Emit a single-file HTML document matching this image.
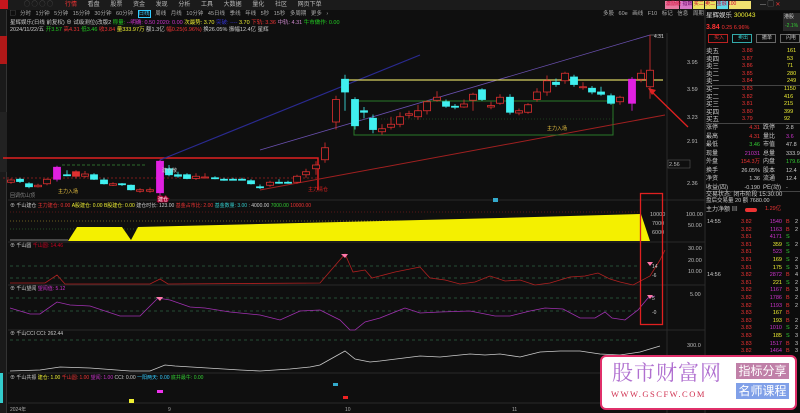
<!DOCTYPE html>
<html><head><meta charset="utf-8">
<style>
*{margin:0;padding:0;box-sizing:border-box}
body{width:800px;height:413px;overflow:hidden;background:#0f0f0f;font-family:"Liberation Sans","Noto Sans CJK SC",sans-serif;font-size:6px;color:#ccc;position:relative}
.a{position:absolute;white-space:nowrap;line-height:1}
svg{position:absolute;left:0;top:0}
</style></head><body>
<div class="a" style="left:0;top:0;width:800px;height:10px;background:#1b1b1b"></div>
<div class="a" style="left:0;top:0;width:8px;height:9px;background:#c8161d"></div>
<div class="a" style="left:0;top:2px;font-size:6px;color:#bbb;word-spacing:9px;left:65px"><span style="color:#e33">行情</span> 看盘 股票 资金 发现 分析 工具 大数据 量化 社区 网页下单</div>
<div class="a" style="left:24px;top:2px;color:#666;font-size:6px">◯ ◯ ◯ ◯</div>
<div class="a" style="left:665px;top:1px;height:8px;width:14px;background:#e87aa0"></div>
<div class="a" style="left:680px;top:1px;height:8px;width:12px;background:#d87ac8"></div>
<div class="a" style="left:693px;top:1px;height:8px;width:11px;background:#e8e060"></div>
<div class="a" style="left:705px;top:1px;height:8px;width:11px;background:#e8e060"></div>
<div class="a" style="left:717px;top:1px;height:8px;width:11px;background:#60d8e8"></div>
<div class="a" style="left:729px;top:1px;height:8px;width:22px;background:#f0e070"></div>
<div class="a" style="left:666px;top:2px;color:#c03;font-size:5px;letter-spacing:0">激励版 <span style="color:#606">指数</span> 买二 卖二 金融 100</div>
<div class="a" style="left:760px;top:2px;color:#aaa;font-size:6px">— ▢ <span style="color:#e33">✕</span></div>
<div class="a" style="left:10px;top:12px;color:#aaa;font-size:5.5px;word-spacing:3px">▢ 分时 1分钟 5分钟 15分钟 30分钟 60分钟 <span style="color:#3cf;border:1px solid #3cf">日线</span> 周线 月线 10分钟 45日线 季线 年线 5秒 15秒 多周期 更多 ›</div>
<div class="a" style="left:603px;top:12px;color:#aaa;font-size:5.5px;word-spacing:3px">多股 60e 画线 F10 标记 信息 周期</div>
<div class="a" style="left:10px;top:21px;font-size:5.5px;color:#ccc">星辉娱乐(日线 前复权) ⊕ 试级测位(改版2 <span style="color:#2c2">称量:</span> <span style="color:#c3c">--明确: 0.50 2020: 0.00</span> <span style="color:#ee3">次最势: 3.70</span> <span style="color:#33c">突破: ----</span> <span style="color:#ee3">3.70</span> <span style="color:#e33">下轨: 3.36</span> <span style="color:#c8c">中轨: 4.31</span> <span style="color:#2c2">牛市做作: 0.00</span></div>
<div class="a" style="left:10px;top:28px;font-size:5.5px;color:#ccc">2024/11/22/五 <span style="color:#2c2">开3.57</span> <span style="color:#e33">高4.31</span> <span style="color:#2c2">低3.46</span> <span style="color:#e33">收3.84</span> <span style="color:#ee3">量333.97万</span> 额1.3亿 <span style="color:#e33">幅0.25(6.96%)</span> 换26.05% 振幅12.4亿 星辉</div>
<div class="a" style="left:0;top:10px;width:7px;height:403px;background:#1a1a1a;border-right:1px solid #333"></div>
<div class="a" style="left:0;top:36px;width:7px;height:28px;background:#b01818"></div>
<div class="a" style="left:0;top:112px;width:7px;height:60px;background:#222"></div>

<svg width="800" height="413">
 <g stroke="#2a2a2a" stroke-width="1">
  <line x1="8" y1="200" x2="705" y2="200"/><line x1="8" y1="242" x2="705" y2="242"/>
  <line x1="8" y1="285" x2="705" y2="285"/><line x1="8" y1="330" x2="705" y2="330"/>
  <line x1="8" y1="373" x2="705" y2="373"/><line x1="8" y1="403" x2="705" y2="403"/>
  <line x1="667" y1="33" x2="667" y2="413"/><line x1="705" y1="10" x2="705" y2="413"/>
 </g>
 <polyline points="3,158 318,158 318,190" fill="none" stroke="#e02020" stroke-width="1.5"/>
 <line x1="3" y1="178" x2="318" y2="178" stroke="#a02020" stroke-dasharray="2,2" stroke-width="0.7"/>
 <line x1="62" y1="165" x2="145" y2="165" stroke="#3a8a3a" stroke-dasharray="3,2" stroke-width="0.7"/>
 <line x1="160" y1="160" x2="420" y2="55" stroke="#2a2a90" stroke-width="1.2"/>
 <line x1="260" y1="150" x2="650" y2="35" stroke="#6a50b0" stroke-width="0.8"/>
 <line x1="260" y1="190" x2="665" y2="115" stroke="#a02020" stroke-width="1"/>
 <line x1="345" y1="80" x2="663" y2="80" stroke="#d8d060" stroke-width="1.2"/>
 <rect x="354" y="101" width="259" height="34" fill="none" stroke="#2a7a2a" stroke-width="1"/>
 <line x1="354" y1="119" x2="613" y2="119" stroke="#2a6a2a" stroke-dasharray="1,2" stroke-width="0.6"/>
 <line x1="650" y1="35" x2="663" y2="35" stroke="#aaa" stroke-width="0.5"/>
 <line x1="650" y1="90" x2="688" y2="127" stroke="#e02020" stroke-width="1.3"/>
 <polygon points="648,88 656,90 652,95" fill="#e02020"/>
 <g id="candles"></g>
 <g font-size="5" font-family="Liberation Sans,Noto Sans CJK SC,sans-serif">
  <text x="58" y="193" fill="#e8c040">主力入场</text>
  <text x="162" y="172" fill="#ccc">建仓散</text>
  <text x="158" y="201" fill="#fff" style="paint-order:stroke" stroke="#a03" stroke-width="2">建仓</text>
  <text x="308" y="191" fill="#e02020">主力清仓</text>
  <text x="547" y="130" fill="#e8c040">主力入场</text>
  <text x="654" y="38" fill="#ccc">4.31</text>
  <text x="10" y="197" fill="#888">回调优山顶</text>
 </g>
 <g font-size="5.5" fill="#bbb" font-family="Liberation Sans">
  <text x="687" y="64">3.95</text><text x="687" y="91">3.59</text><text x="687" y="119">3.23</text>
  <text x="687" y="143">2.91</text><text x="687" y="185">2.36</text>
  <rect x="668" y="160" width="22" height="8" fill="none" stroke="#666" stroke-width="0.5"/><text x="669" y="166">2.56</text>
  <text x="686" y="216">100.00</text><text x="688" y="227">50.00</text>
  <text x="688" y="250">30.00</text><text x="688" y="262">20.00</text><text x="688" y="273">10.00</text>
  <text x="690" y="296">5.00</text><text x="687" y="347">300.0</text>
  <text x="650" y="216">10000</text><text x="652" y="225">7000</text><text x="652" y="234">6000</text>
 </g>
 <g font-size="5" font-family="Liberation Sans,Noto Sans CJK SC,sans-serif">
  <text x="10" y="207" fill="#ccc">⊕ 千山建仓 <tspan fill="#e33">主力建仓: 0.00</tspan> <tspan fill="#ee3">A股建仓: 0.00</tspan> <tspan fill="#ee3">B股建仓: 0.00</tspan> <tspan fill="#ccc">建仓时长: 123.00</tspan> <tspan fill="#e33">基金占市比: 2.00</tspan> <tspan fill="#3cc">基金数量: 3.00</tspan> : 4000.00 <tspan fill="#3c3">7000.00</tspan> <tspan fill="#e33">10000.00</tspan></text>
 </g>
 <line x1="10" y1="212" x2="640" y2="212" stroke="#a02020" stroke-dasharray="1,2" stroke-width="0.6"/>
 <line x1="10" y1="221" x2="640" y2="221" stroke="#ccaa30" stroke-dasharray="1,2" stroke-width="0.6"/>
 <line x1="10" y1="229" x2="640" y2="229" stroke="#3a8a3a" stroke-dasharray="1,2" stroke-width="0.6"/>
 <polygon points="68,241 77,227 122,227 131,240 138,227 300,223 500,218 641,214 650,241" fill="#f4f000"/>
 <line x1="10" y1="240" x2="68" y2="240" stroke="#aaa" stroke-width="0.7"/>
 <text x="10" y="247" font-size="5" fill="#ccc">⊕ 千山圆 <tspan fill="#c02">千山圆: 14.46</tspan></text>
 <g stroke="#3a8a5a" stroke-dasharray="3,3" stroke-width="0.6"><line x1="10" y1="266" x2="640" y2="266"/><line x1="10" y1="278" x2="640" y2="278"/><line x1="10" y1="298" x2="640" y2="298"/><line x1="10" y1="311" x2="640" y2="311"/><line x1="10" y1="340" x2="640" y2="340"/></g>
 <polyline fill="none" stroke="#b02020" stroke-width="0.8" points="10,283 45,283 57,275 65,284 150,284 160,279 168,284 320,283 345,254 353,272 365,270 372,278 395,272 415,268 420,267 430,278 445,280 460,284 475,282 490,276 505,281 520,280 535,285 550,283 570,277 585,276 598,273 610,279 620,282 633,285 650,276 660,260 665,250"/>
 <text x="10" y="290" font-size="5" fill="#ccc">⊕ 千山望闻 <tspan fill="#c3c">望闻值: 5.12</tspan></text>
 <polyline fill="none" stroke="#a030b0" stroke-width="0.8" points="10,308 30,314 40,314 57,302 70,305 90,306 120,316 140,316 158,298 170,300 190,307 205,308 230,312 260,315 280,320 300,311 320,310 340,320 350,330 355,330 365,322 380,318 400,310 405,308 420,313 440,312 470,311 495,316 510,316 530,311 545,308 563,309 580,318 595,318 605,312 612,318 625,320 638,310 648,298 655,296"/>
 <polygon points="156,297 163,297 160,301" fill="#f7a"/><polygon points="341,254 348,254 345,258" fill="#f7a"/>
 <text x="10" y="335" font-size="5" fill="#ccc">⊕ 千山CCI CCI: 262.44</text>
 <polyline fill="none" stroke="#ccc" stroke-width="0.8" points="10,371 40,370 60,367 90,368 130,371 150,371 165,365 175,366 240,370 260,371 290,369 310,367 320,365 345,351 355,359 370,362 380,361 420,356 440,357 470,354 485,355 500,354 520,357 540,352 560,351 580,351 600,354 620,355 640,352 660,346"/>
 <text x="10" y="379" font-size="5" fill="#ccc">⊕ 千山共振 <tspan fill="#ee3">建仓: 1.00</tspan> <tspan fill="#e33">千山圆: 1.00</tspan> <tspan fill="#c3c">望闻: 1.00</tspan> CCI: 0.00 <tspan fill="#3cf">一阳两天: 0.00</tspan> <tspan fill="#3c3">底井最牛: 0.00</tspan></text>
 <rect x="129" y="399" width="5" height="4" fill="#ee3"/><rect x="157" y="390" width="6" height="3" fill="#e3e"/>
 <rect x="333" y="383" width="5" height="3" fill="#3ac"/><rect x="343" y="396" width="5" height="3" fill="#e22"/>
 <rect x="0" y="373" width="3" height="30" fill="#3cc"/>
 <text x="10" y="411" font-size="5" fill="#aaa">2024年</text><text x="168" y="411" font-size="5" fill="#aaa">9</text>
 <text x="345" y="411" font-size="5" fill="#aaa">10</text><text x="512" y="411" font-size="5" fill="#aaa">11</text>
 <text x="652" y="268" font-size="5" fill="#ccc">14</text><text x="652" y="277" font-size="5" fill="#ccc">-6</text>
 <text x="652" y="300" font-size="5" fill="#ccc">5</text><text x="652" y="314" font-size="5" fill="#ccc">-0</text>
 <polygon points="647,262 653,262 650,266" fill="#f7a"/><polygon points="647,295 653,295 650,299" fill="#f7a"/>
 <rect x="640.5" y="193.5" width="22" height="131" fill="none" stroke="#e02020" stroke-width="1.3"/>
 <rect x="493" y="198" width="5" height="4" fill="#3ac"/>
</svg>

<div class="a" style="left:706px;top:11px;width:94px;height:402px;background:#0c0c0c"></div>
<div class="a" style="left:706px;top:13px;font-size:6.5px;color:#ddd">星辉娱乐 <span style="color:#ee3">300043</span></div>
<div class="a" style="left:783px;top:13px;width:17px;height:18px;background:#2a2a2a"></div>
<div class="a" style="left:784px;top:15px;font-size:5px;color:#ccc">港股</div>
<div class="a" style="left:785px;top:24px;font-size:5px;color:#3c3">-2.1%</div>
<div class="a" style="left:706px;top:24px;font-size:7px;color:#f33;font-weight:bold">3.84 <span style="font-size:5.5px;font-weight:normal">0.25 6.96%</span></div>
<div class="a" style="left:708px;top:34px;width:20px;height:9px;border:1px solid #b22;color:#e33;font-size:5px;padding:1px 5px">买入</div>
<div class="a" style="left:732px;top:34px;width:20px;height:9px;border:1px solid #3aa;color:#3cc;font-size:5px;padding:1px 5px">卖出</div>
<div class="a" style="left:756px;top:34px;width:20px;height:9px;border:1px solid #666;color:#ccc;font-size:5px;padding:1px 5px">撤单</div>
<div class="a" style="left:780px;top:34px;width:20px;height:9px;border:1px solid #666;color:#ccc;font-size:5px;padding:1px 5px">闪电</div>
<div class="a" style="left:706px;top:48px;font-size:6.5px;line-height:7.5px;color:#ccc">卖五<br>卖四<br>卖三<br>卖二<br>卖一</div>
<div class="a" style="left:742px;top:48px;font-size:5.5px;line-height:7.5px;color:#e33">3.88<br>3.87<br>3.86<br>3.85<br>3.84</div>
<div class="a" style="left:787px;top:48px;font-size:5.5px;line-height:7.5px;color:#ee3">161<br>53<br>71<br>280<br>249</div>
<div class="a" style="left:706px;top:85px;width:94px;border-top:1px solid #444"></div>
<div class="a" style="left:706px;top:86px;font-size:6.5px;line-height:7.5px;color:#ccc">买一<br>买二<br>买三<br>买四<br>买五</div>
<div class="a" style="left:742px;top:86px;font-size:5.5px;line-height:7.5px;color:#e33">3.83<br>3.82<br>3.81<br>3.80<br>3.79</div>
<div class="a" style="left:784px;top:86px;font-size:5.5px;line-height:7.5px;color:#ee3">1150<br>416<br>215<br>399<br>92</div>
<div class="a" style="left:706px;top:123px;width:94px;border-top:1px solid #444"></div>
<div class="a" style="left:706px;top:124px;font-size:6px;line-height:8.5px;color:#ccc">涨停<br>最高<br>最低<br>现量<br>外盘<br>换手<br>净资<br>收益(四)</div>
<div class="a" style="left:736px;top:124px;font-size:5.5px;line-height:8.5px;color:#e33;text-align:right;width:24px">4.31<br>4.31<br><span style="color:#3c3">3.46</span><br><span style="color:#c3c">21031</span><br>154.3万<br><span style="color:#ccc">26.05%</span><br><span style="color:#ccc">1.36</span><br><span style="color:#ccc">-0.190</span></div>
<div class="a" style="left:763px;top:124px;font-size:6px;line-height:8.5px;color:#ccc">跌停<br>量比<br>市值<br>总量<br>内盘<br>股本<br>流通<br>PE(动)</div>
<div class="a" style="left:786px;top:124px;font-size:5.5px;line-height:8.5px;color:#ccc">2.8<br><span style="color:#c3c">3.6</span><br>47.8<br>333.9<br><span style="color:#3c3">179.6</span><br>12.4<br>12.4<br>-</div>
<div class="a" style="left:706px;top:191px;width:94px;border-top:1px solid #444"></div>
<div class="a" style="left:706px;top:192px;font-size:6px;color:#ccc">交易状态: 闭市阶段 15:30:00</div>
<div class="a" style="left:706px;top:199px;font-size:5.5px;color:#ccc">盘后交易量 20 额 7680.00</div>
<div class="a" style="left:706px;top:207px;font-size:6px;color:#ccc">主力净额 ▤</div>
<div class="a" style="left:745px;top:208px;width:12px;height:4px;background:#e33;border-radius:2px"></div>
<div class="a" style="left:765px;top:207px;font-size:5.5px;color:#e33">1.29亿</div>
<div class="a" style="left:707px;top:219px;font-size:5.5px;line-height:7.6px;color:#ccc">14:55<br><br><br><br><br><br><br>14:56</div>
<div class="a" style="left:741px;top:219px;font-size:5.5px;line-height:7.6px;color:#e33">3.82<br>3.82<br>3.81<br>3.81<br>3.81<br>3.81<br>3.81<br>3.82<br>3.81<br>3.82<br>3.82<br>3.82<br>3.83<br>3.83<br>3.83<br>3.83<br>3.83<br>3.82<br>3.82<br>3.82<br>3.82<br>3.83<br>3.83<br>3.82<br>3.82</div>
<div class="a" style="left:760px;top:219px;width:22px;text-align:right;font-size:5.5px;line-height:7.6px;color:#c3c">1540<br>1163<br>4171<br><span style="color:#ee3">359</span><br>523<br><span style="color:#ee3">169</span><br><span style="color:#ee3">175</span><br>2872<br><span style="color:#ee3">221</span><br>1167<br>1786<br>1193<br><span style="color:#ee3">167</span><br><span style="color:#ee3">193</span><br>1010<br><span style="color:#ee3">185</span><br>1517<br>1464<br>1555<br>1167<br>1661<br>1000<br>862<br>1255<br>1104</div>
<div class="a" style="left:786px;top:219px;font-size:5.5px;line-height:7.6px;color:#e33">B<br>B<br><span style="color:#3c3">S</span><br><span style="color:#3c3">S</span><br><span style="color:#3c3">S</span><br><span style="color:#3c3">S</span><br><span style="color:#3c3">S</span><br>B<br><span style="color:#3c3">S</span><br>B<br>B<br>B<br>B<br>B<br><span style="color:#3c3">S</span><br><span style="color:#3c3">S</span><br>B<br>B<br>B<br>B<br>B<br>B<br>B<br>B<br>B</div>
<div class="a" style="left:795px;top:219px;font-size:5.5px;line-height:7.6px;color:#ccc">2<br>2<br><br>2<br><br>2<br>3<br>4<br>2<br>3<br>2<br>2<br><br>2<br>2<br>3<br>3<br>3</div>

<div class="a" style="left:600px;top:355px;width:197px;height:55px;background:#fff;border:2px solid #e0306a;border-radius:6px"></div>
<div class="a" style="left:612px;top:362px;font-size:21px;color:#b070d0;font-family:'Noto Serif CJK SC',serif;letter-spacing:1px">股市财富网</div>
<div class="a" style="left:611px;top:390px;font-size:8.5px;color:#d03050;font-family:'Liberation Serif',serif;letter-spacing:1.5px">WWW.GSCFW.COM</div>
<div class="a" style="left:736px;top:363px;width:53px;height:16px;background:#c080a8;color:#fff;font-size:12px;text-align:center;padding-top:2px">指标分享</div>
<div class="a" style="left:736px;top:383px;width:53px;height:16px;background:#80a0e8;color:#fff;font-size:12px;text-align:center;padding-top:2px">名师课程</div>

<script>
var Y0=function(p){return 62+(3.95-p)*75};
var c=[
[11,2.55,2.52,2.57,2.50,'r'],[20,2.56,2.53,2.58,2.51,'c'],[29,2.50,2.46,2.52,2.44,'c'],[38,2.46,2.48,2.50,2.45,'r'],
[47,2.50,2.56,2.57,2.48,'r'],[57,2.56,2.72,2.74,2.53,'m'],[67,2.62,2.62,2.68,2.60,'c'],[76,2.60,2.66,2.68,2.57,'f'],
[85,2.63,2.60,2.67,2.58,'r'],[94,2.62,2.56,2.64,2.55,'c'],[104,2.55,2.50,2.58,2.49,'c'],[113,2.48,2.50,2.52,2.47,'r'],
[122,2.50,2.49,2.51,2.47,'c'],[131,2.48,2.42,2.49,2.41,'c'],[140,2.40,2.42,2.44,2.38,'r'],[150,2.40,2.42,2.45,2.38,'r'],
[160,2.38,2.80,2.82,2.33,'m'],[169,2.70,2.62,2.75,2.60,'c'],[178,2.62,2.60,2.66,2.58,'c'],[187,2.62,2.57,2.64,2.56,'c'],
[196,2.57,2.60,2.64,2.55,'r'],[205,2.59,2.59,2.64,2.57,'r'],[215,2.58,2.57,2.60,2.56,'c'],[224,2.56,2.56,2.58,2.54,'c'],
[233,2.56,2.56,2.58,2.55,'c'],[242,2.56,2.56,2.58,2.55,'c'],[251,2.54,2.50,2.56,2.49,'c'],[260,2.46,2.46,2.49,2.43,'c'],
[270,2.48,2.52,2.54,2.46,'r'],[279,2.52,2.52,2.56,2.50,'c'],[288,2.52,2.52,2.54,2.50,'c'],[297,2.52,2.60,2.62,2.50,'r'],
[306,2.62,2.66,2.70,2.58,'r'],[316,2.70,2.75,2.80,2.62,'r'],[325,2.82,2.98,3.05,2.78,'r'],[336,3.15,3.45,3.50,3.05,'r'],
[345,3.72,3.55,3.78,3.30,'c'],[355,3.45,3.10,3.48,3.05,'c'],[364,3.30,3.28,3.35,3.20,'c'],[373,3.20,3.05,3.25,3.00,'c'],
[382,3.02,3.06,3.12,2.98,'r'],[391,3.08,3.12,3.22,3.05,'r'],[400,3.12,3.22,3.28,3.08,'r'],[409,3.26,3.24,3.30,3.20,'r'],
[418,3.22,3.30,3.38,3.18,'r'],[427,3.30,3.42,3.44,3.25,'r'],[437,3.44,3.48,3.56,3.42,'r'],[446,3.42,3.36,3.45,3.34,'c'],
[455,3.36,3.35,3.39,3.32,'c'],[464,3.35,3.39,3.45,3.34,'r'],[473,3.44,3.52,3.54,3.30,'r'],[482,3.58,3.45,3.60,3.43,'c'],
[491,3.35,3.37,3.42,3.32,'r'],[500,3.40,3.48,3.52,3.38,'r'],[510,3.48,3.28,3.52,3.25,'c'],[519,3.27,3.30,3.33,3.24,'r'],
[528,3.28,3.38,3.40,3.26,'r'],[537,3.45,3.55,3.60,3.42,'r'],[547,3.55,3.70,3.77,3.50,'r'],[556,3.68,3.65,3.73,3.62,'c'],
[565,3.70,3.80,3.82,3.66,'r'],[574,3.75,3.65,3.78,3.62,'c'],[583,3.62,3.62,3.68,3.58,'r'],[592,3.60,3.55,3.63,3.52,'c'],
[601,3.55,3.52,3.62,3.50,'c'],[611,3.50,3.40,3.53,3.38,'c'],[620,3.48,3.42,3.50,3.38,'r'],[632,3.40,3.72,3.75,3.30,'m'],
[641,3.72,3.80,3.85,3.68,'r'],[650,3.62,3.84,4.31,3.46,'r']];
var s='';
c.forEach(function(d){var x=d[0],off=x<330?13:0,Y=function(p){return Y0(p)+off;};
var o=Y(d[1]),cl=Y(d[2]),h=Y(d[3]),l=Y(d[4]),t=d[5];
var col={r:'#e03030',c:'#40f0f0',m:'#e020e0',f:'#e03030'}[t];
var top=Math.min(o,cl),bh=Math.max(1,Math.abs(o-cl));
s+='<line x1="'+x+'" y1="'+h+'" x2="'+x+'" y2="'+l+'" stroke="'+col+'" stroke-width="0.8"/>';
var fill=(t=='r')?'#0f0f0f':col;
s+='<rect x="'+(x-3.5)+'" y="'+top+'" width="7" height="'+bh+'" fill="'+fill+'" stroke="'+col+'" stroke-width="0.8"/>';});
document.getElementById('candles').innerHTML=s;
</script>
</body></html>
